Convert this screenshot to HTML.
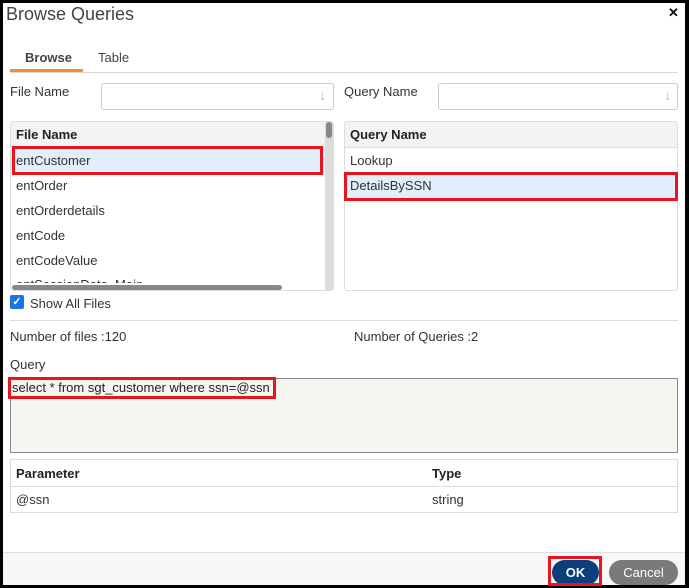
<!DOCTYPE html>
<html><head><style>
*{margin:0;padding:0;box-sizing:border-box}
body{width:689px;height:588px;background:#000;position:relative;overflow:hidden;font-family:"Liberation Sans",sans-serif;font-size:13px;color:#333}
.a{position:absolute}
#w{left:3px;top:3px;width:682px;height:582px;background:#fff}
.t{position:absolute;white-space:nowrap}
.box{position:absolute;border:1px solid #ddd;background:#fff}
.red{position:absolute;border:3px solid #e8141e}
</style></head><body>
<div class="a" id="w"></div>
<div class="t" style="left:6px;top:4px;font-size:18px;color:#444">Browse Queries</div>
<div class="t" style="left:668px;top:5px;font-size:13px;font-weight:bold;color:#111">✕</div>
<div class="t" style="left:25px;top:50px;font-weight:bold;color:#444">Browse</div>
<div class="t" style="left:98px;top:50px;color:#444">Table</div>
<div class="a" style="left:10px;top:72px;width:668px;height:1px;background:#d8d8d8"></div>
<div class="a" style="left:10px;top:69px;width:73px;height:3px;background:#f39325"></div>

<div class="t" style="left:10px;top:84px;color:#333">File Name</div>
<div class="box" style="left:101px;top:83px;width:233px;height:27px;border-color:#ccc;border-radius:3px"></div>
<div class="t" style="left:319px;top:87px;color:#bbb;font-size:15px">↓</div>
<div class="t" style="left:344px;top:84px;color:#333">Query Name</div>
<div class="box" style="left:438px;top:83px;width:240px;height:27px;border-color:#ccc;border-radius:3px"></div>
<div class="t" style="left:664px;top:87px;color:#bbb;font-size:15px">↓</div>

<!-- left grid -->
<div class="box" style="left:10px;top:121px;width:324px;height:170px;border-radius:3px;overflow:hidden">
 <div class="a" style="left:0;top:0;width:324px;height:26px;background:#f3f3f3;border-bottom:1px solid #ddd"></div>
 <div class="t" style="left:5px;top:5px;font-weight:bold;color:#222">File Name</div>
 <div class="a" style="left:0;top:26px;width:314px;height:26px;background:#e0effb"></div>
 <div class="t" style="left:5px;top:31px">entCustomer</div>
 <div class="t" style="left:5px;top:56px">entOrder</div>
 <div class="t" style="left:5px;top:81px">entOrderdetails</div>
 <div class="t" style="left:5px;top:106px">entCode</div>
 <div class="t" style="left:5px;top:131px">entCodeValue</div>
 <div class="t" style="left:5px;top:155px">entSessionData_Main</div>
 <div class="a" style="left:314px;top:0;width:9px;height:170px;background:#dcdcdc"></div>
 <div class="a" style="left:315px;top:0;width:6px;height:16px;background:#888;border-radius:3px"></div>
 <div class="a" style="left:0;top:161px;width:314px;height:8px;background:#fff"></div>
 <div class="a" style="left:1px;top:163px;width:270px;height:5px;background:#888;border-radius:3px"></div>
</div>
<div class="red" style="left:12px;top:146px;width:311px;height:29px"></div>

<!-- right grid -->
<div class="box" style="left:344px;top:121px;width:334px;height:170px;border-radius:3px;overflow:hidden">
 <div class="a" style="left:0;top:0;width:334px;height:26px;background:#f3f3f3;border-bottom:1px solid #ddd"></div>
 <div class="t" style="left:5px;top:5px;font-weight:bold;color:#222">Query Name</div>
 <div class="t" style="left:5px;top:31px">Lookup</div>
 <div class="a" style="left:0;top:51px;width:334px;height:27px;background:#e0effb"></div>
 <div class="t" style="left:5px;top:56px">DetailsBySSN</div>
</div>
<div class="red" style="left:344px;top:172px;width:334px;height:29px"></div>

<div class="a" style="left:10px;top:295px;width:14px;height:14px;background:#1a73e8;border-radius:2px;color:#fff;font-size:11px;line-height:14px;text-align:center;font-weight:bold">✓</div>
<div class="t" style="left:30px;top:296px">Show All Files</div>
<div class="a" style="left:10px;top:320px;width:668px;height:1px;background:#ddd"></div>
<div class="t" style="left:10px;top:329px">Number of files :120</div>
<div class="t" style="left:354px;top:329px">Number of Queries :2</div>
<div class="t" style="left:10px;top:357px">Query</div>
<div class="a" style="left:10px;top:378px;width:668px;height:75px;background:#f6f6f1;border:1px solid #888"></div>
<div class="t" style="left:12px;top:380px;color:#222">select * from sgt_customer where ssn=@ssn</div>
<div class="red" style="left:8px;top:377px;width:268px;height:22px"></div>

<div class="box" style="left:10px;top:459px;width:668px;height:54px">
 <div class="a" style="left:0;top:0;width:666px;height:27px;background:#fff;border-bottom:1px solid #ddd"></div>
 <div class="t" style="left:5px;top:6px;font-weight:bold;color:#222">Parameter</div>
 <div class="t" style="left:421px;top:6px;font-weight:bold;color:#222">Type</div>
 <div class="t" style="left:5px;top:32px">@ssn</div>
 <div class="t" style="left:421px;top:32px">string</div>
</div>

<div class="a" style="left:3px;top:552px;width:682px;height:33px;background:#f7f7f7;border-top:1px solid #ddd"></div>
<div class="a" style="left:552px;top:560px;width:47px;height:25px;background:#0b3f7a;border-radius:13px;color:#fff;font-size:13px;font-weight:bold;line-height:25px;text-align:center">OK</div>
<div class="red" style="left:548px;top:556px;width:54px;height:30px"></div>
<div class="a" style="left:609px;top:560px;width:69px;height:25px;background:#7a7a7a;border-radius:13px;color:#fff;font-size:13px;line-height:25px;text-align:center">Cancel</div>
</body></html>
